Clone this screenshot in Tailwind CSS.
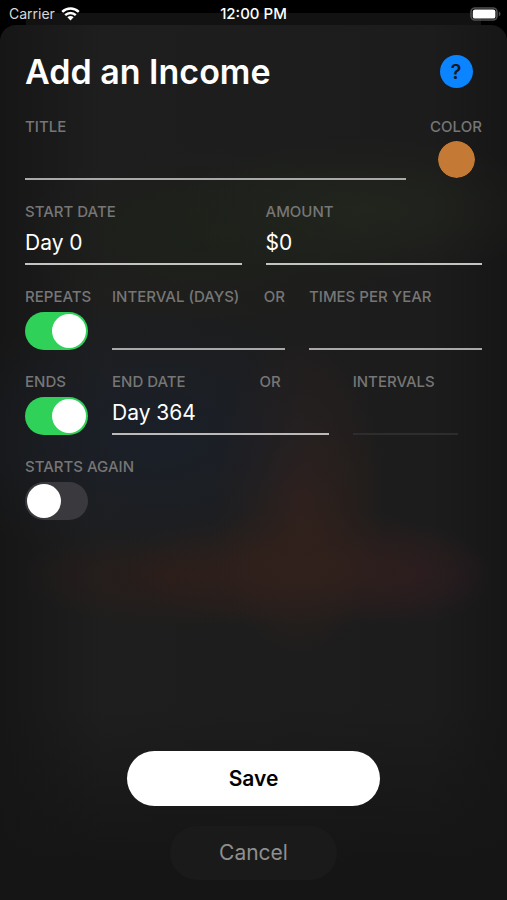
<!DOCTYPE html>
<html lang="en" class="h-full">
<head>
<meta charset="utf-8">
<meta name="viewport" content="width=device-width, initial-scale=1">
<title>Add an Income</title>
<script src="https://cdn.jsdelivr.net/npm/@tailwindcss/browser@4"></script>
</head>
<body class="flex min-h-screen flex-col bg-black font-['Inter','Liberation_Sans',sans-serif] text-white">
  <header class="relative grid h-[25px] grid-cols-3 items-center px-[9px] pt-[3px] leading-[22px]">
    <div class="absolute inset-x-[26px] top-[13px] bottom-0 bg-[#121212]"></div>
    <div class="relative flex items-center gap-[6px] text-[14px] text-[#d8d8d8]">
      <span>Carrier</span>
      <svg class="h-[14px] w-[19px]" viewBox="0 0 19 14" fill="none" stroke="#ffffff" role="img" aria-label="Wi-Fi">
        <path d="M1.2 4.9C6 .4 13 .4 17.8 4.9" stroke-width="2.5"/>
        <path d="M4.2 8.1C7.2 5.2 11.8 5.2 14.8 8.1" stroke-width="2.4"/>
        <path d="M6.4 10.3C8.2 8.7 10.8 8.7 12.6 10.3L9.5 13.4Z" fill="#ffffff" stroke="none"/>
      </svg>
    </div>
    <time class="relative text-center text-[15px] font-medium">12:00 PM</time>
    <svg class="relative -mr-[4px] h-[14px] w-[32px] justify-self-end" viewBox="0 0 32 14" role="img" aria-label="Battery full">
      <rect x="1" y="1" width="26" height="12" rx="4" fill="none" stroke="#505050" stroke-width="1.6"/>
      <rect x="2.8" y="2.4" width="22.6" height="9.2" rx="2.2" fill="#ffffff"/>
      <path d="M28.8 4.6C31 5.6 31 8.4 28.8 9.4Z" fill="#505050"/>
    </svg>
  </header>

  <main class="flex flex-1 flex-col rounded-t-2xl bg-[#1b1b1b] bg-[linear-gradient(to_bottom,transparent_78%,#151515_96%),radial-gradient(ellipse_38%_8%_at_72%_21%,#23271dcc_0%,#23271d00_100%),radial-gradient(ellipse_40%_10%_at_42%_24%,#1d2219cc_0%,#1d221900_100%),radial-gradient(ellipse_44%_15%_at_30%_47%,#1a1f28_0%,#1a1f2800_100%),radial-gradient(ellipse_17%_19%_at_59%_54%,#33211b_0%,#33211b00_100%),radial-gradient(ellipse_36%_7%_at_60%_62%,#33211bcc_0%,#33211b00_100%),radial-gradient(ellipse_18%_6%_at_80%_63%,#2a1b20_0%,#2a1b2000_100%),radial-gradient(ellipse_34%_6%_at_36%_63%,#2a1d1a_0%,#2a1d1a00_100%),linear-gradient(to_right,#161616_0%,#1e1e1e_20%,#1c1c1c_85%,#161616_100%)] px-[25px] pb-5">
    <div class="flex h-[93px] items-center justify-between">
      <h1 class="text-[34px] leading-[44px] font-semibold">Add an Income</h1>
      <div class="flex w-[52px] justify-center">
        <button type="button" aria-label="Help" class="flex size-[33px] items-center justify-center rounded-full bg-[#0a84ff] text-[20px] leading-none font-semibold text-[#14181f]">?</button>
      </div>
    </div>

    <form class="flex flex-1 flex-col">
      <div class="flex flex-col gap-[23px] text-[15px] leading-[18px] font-medium whitespace-nowrap text-[#767676]">
        <div class="flex h-[62px] gap-6">
          <div class="flex min-w-0 flex-1 flex-col">
            <label for="title">TITLE</label>
            <input id="title" type="text" class="w-full min-w-0 flex-1 border-b-2 border-[#a9a9a9] bg-transparent text-[21px] font-normal text-white outline-none">
          </div>
          <div class="flex w-[52px] flex-col items-center gap-[5px]">
            <label for="color">COLOR</label>
            <input id="color" type="color" value="#c47a35" class="size-[37px] appearance-none rounded-full border-0 bg-transparent p-0 [&::-webkit-color-swatch]:rounded-full [&::-webkit-color-swatch]:border-0 [&::-webkit-color-swatch-wrapper]:p-0">
          </div>
        </div>

        <div class="grid h-[62px] grid-cols-2 gap-6">
          <div class="flex min-w-0 flex-col">
            <label for="start">START DATE</label>
            <input id="start" type="text" value="Day 0" class="w-full min-w-0 flex-1 border-b-2 border-[#c4c4c0] bg-transparent text-[21px] font-normal text-white outline-none">
          </div>
          <div class="flex min-w-0 flex-col">
            <label for="amount">AMOUNT</label>
            <input id="amount" type="text" value="$0" class="w-full min-w-0 flex-1 border-b-2 border-[#c4c4c0] bg-transparent text-[21px] font-normal text-white outline-none">
          </div>
        </div>

        <div class="flex h-[62px] gap-6">
          <div class="flex w-[63px] flex-col gap-[6px]">
            <label for="repeats">REPEATS</label>
            <input id="repeats" type="checkbox" role="switch" checked class="flex h-[38px] w-[63px] appearance-none items-center rounded-full bg-[#3a3a3e] px-[2px] before:size-[34px] before:rounded-full before:bg-white checked:justify-end checked:bg-[#30d158]">
          </div>
          <div class="grid flex-1 grid-cols-2 gap-6">
            <div class="flex min-w-0 flex-col">
              <div class="flex justify-between"><label for="interval">INTERVAL (DAYS)</label><span>OR</span></div>
              <input id="interval" type="text" class="w-full min-w-0 flex-1 border-b-2 border-[#a9a9a9] bg-transparent text-[21px] font-normal text-white outline-none">
            </div>
            <div class="flex min-w-0 flex-col">
              <label for="times">TIMES PER YEAR</label>
              <input id="times" type="text" class="w-full min-w-0 flex-1 border-b-2 border-[#a9a9a9] bg-transparent text-[21px] font-normal text-white outline-none">
            </div>
          </div>
        </div>

        <div class="flex h-[62px] gap-6">
          <div class="flex w-[63px] flex-col gap-[6px]">
            <label for="ends">ENDS</label>
            <input id="ends" type="checkbox" role="switch" checked class="flex h-[38px] w-[63px] appearance-none items-center rounded-full bg-[#3a3a3e] px-[2px] before:size-[34px] before:rounded-full before:bg-white checked:justify-end checked:bg-[#30d158]">
          </div>
          <div class="grid flex-1 grid-cols-[216fr_105fr] gap-6 pr-6">
            <div class="flex min-w-0 flex-col">
              <div class="flex justify-between pr-12"><label for="end">END DATE</label><span>OR</span></div>
              <input id="end" type="text" value="Day 364" class="w-full min-w-0 flex-1 border-b-2 border-[#bdb9b8] bg-transparent text-[21px] font-normal text-white outline-none">
            </div>
            <div class="flex min-w-0 flex-col">
              <label for="intervals">INTERVALS</label>
              <input id="intervals" type="text" disabled class="w-full min-w-0 flex-1 border-b-2 border-[#2d2d2d] bg-transparent text-[21px] font-normal text-white outline-none">
            </div>
          </div>
        </div>

        <div class="flex h-[62px] w-[63px] flex-col gap-[6px]">
          <label for="again">STARTS AGAIN</label>
          <input id="again" type="checkbox" role="switch" class="flex h-[38px] w-[63px] appearance-none items-center rounded-full bg-[#3a3a3e] px-[2px] before:size-[34px] before:rounded-full before:bg-white checked:justify-end checked:bg-[#30d158]">
        </div>
      </div>

      <div class="mt-auto flex flex-col items-center gap-5 text-[21px]">
        <button type="submit" class="h-[55px] w-[253px] rounded-full bg-white font-semibold text-black">Save</button>
        <button type="button" class="h-[54px] w-[167px] rounded-full bg-[#1a1a1a] text-[#8f8f8f]">Cancel</button>
      </div>
    </form>
  </main>
</body>
</html>
